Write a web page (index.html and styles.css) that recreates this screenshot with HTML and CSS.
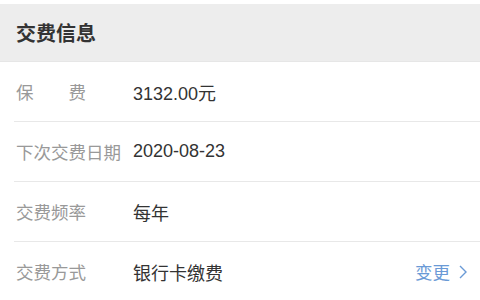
FILE: index.html
```html
<!DOCTYPE html>
<html lang="zh-CN">
<head>
<meta charset="utf-8">
<link rel="stylesheet" href="styles.css">
</head>
<body>
<div class="page">
  <div class="header">交费信息</div>
  <div class="list">
    <div class="row">
      <span class="label justify"><span>保</span><span>费</span></span>
      <span class="value">3132.00元</span>
    </div>
    <div class="row">
      <span class="label">下次交费日期</span>
      <span class="value">2020-08-23</span>
    </div>
    <div class="row">
      <span class="label">交费频率</span>
      <span class="value">每年</span>
    </div>
    <div class="row">
      <span class="label">交费方式</span>
      <span class="value">银行卡缴费</span>
      <span class="action">变更
        <svg class="chev" width="8" height="14" viewBox="0 0 8 14"><path d="M1 1 L7 7 L1 13" fill="none" stroke="#6a9ad6" stroke-width="1.4"/></svg>
      </span>
    </div>
  </div>
</div>
</body>
</html>
```
FILE: styles.css
```css
html, body { margin: 0; padding: 0; background: #fff; }
body { font-family: "Noto Sans CJK SC", "Liberation Sans", sans-serif; }
.page { padding-top: 4px; }
.header {
  height: 57px;
  background: #ededed;
  display: flex;
  align-items: center;
  padding-left: 16px;
  font-size: 20px;
  font-weight: bold;
  color: #333;
  border-bottom: 1px solid #e6e6e6;
}
.list { padding-left: 14px; }
.row {
  height: 59px;
  display: flex;
  align-items: center;
  border-bottom: 1px solid #e8e8e8;
  padding-right: 13px;
}
.row:last-child { border-bottom: none; }
.label {
  width: 117px;
  padding-left: 2px;
  font-size: 17.5px;
  color: #999;
  flex: none;
}
.label.justify {
  display: flex;
  justify-content: space-between;
  width: 70px;
  margin-right: 47px;
}
.value {
  flex: 1;
  font-family: "Liberation Sans", "Noto Sans CJK SC", sans-serif;
  font-size: 18px;
  color: #333;
}
.action {
  display: flex;
  align-items: center;
  gap: 9px;
  font-size: 17.5px;
  color: #6a9ad6;
}
.chev { display: block; }
```
